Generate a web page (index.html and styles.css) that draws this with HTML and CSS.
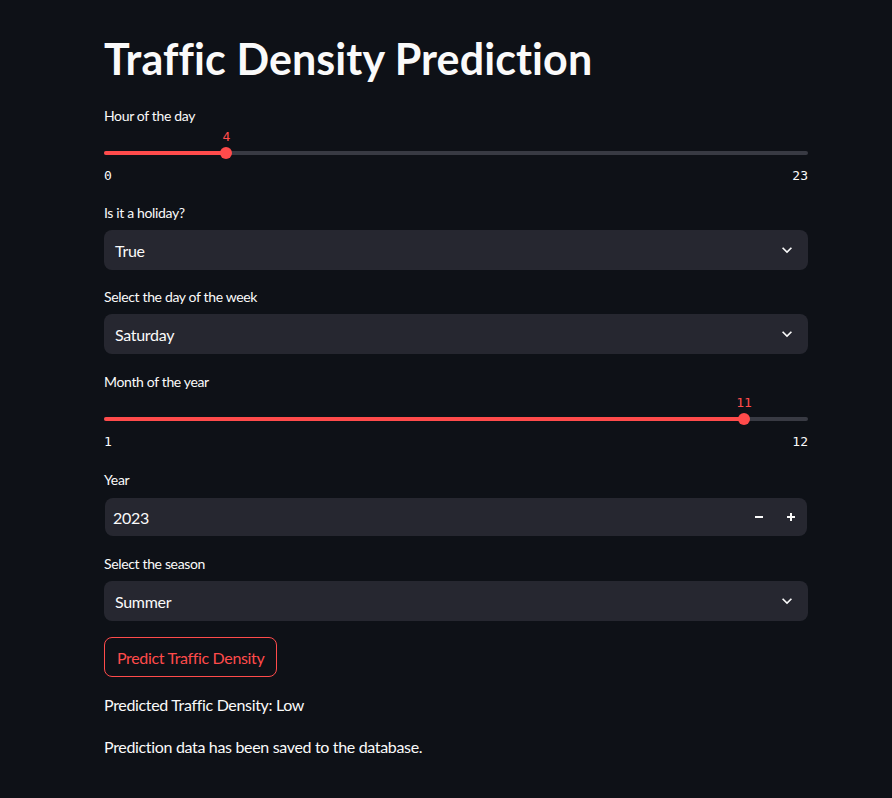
FILE: index.html
```html
<!DOCTYPE html>
<html lang="en">
<head>
<meta charset="utf-8">
<title>Traffic Density Prediction</title>
<link rel="stylesheet" href="styles.css">
</head>
<body>
<main class="main">
  <h1 class="title">Traffic Density Prediction</h1>

  <div class="widget">
    <div class="label">Hour of the day</div>
    <div class="slider">
      <div class="track">
        <div class="fill" style="width: 17.39%"></div>
        <div class="thumb" style="left: 17.39%"><span class="thumb-value">4</span></div>
      </div>
    </div>
    <div class="ticks"><span>0</span><span>23</span></div>
  </div>

  <div class="widget">
    <div class="label">Is it a holiday?</div>
    <div class="select">
      <span class="select-value">True</span>
      <svg class="chevron" viewBox="0 0 24 24" width="20" height="20"><path d="M16.59 8.59L12 13.17 7.41 8.59 6 10l6 6 6-6z" fill="currentColor"/></svg>
    </div>
  </div>

  <div class="widget">
    <div class="label">Select the day of the week</div>
    <div class="select">
      <span class="select-value">Saturday</span>
      <svg class="chevron" viewBox="0 0 24 24" width="20" height="20"><path d="M16.59 8.59L12 13.17 7.41 8.59 6 10l6 6 6-6z" fill="currentColor"/></svg>
    </div>
  </div>

  <div class="widget widget-month">
    <div class="label">Month of the year</div>
    <div class="slider">
      <div class="track">
        <div class="fill" style="width: 90.91%"></div>
        <div class="thumb" style="left: 90.91%"><span class="thumb-value">11</span></div>
      </div>
    </div>
    <div class="ticks"><span>1</span><span>12</span></div>
  </div>

  <div class="widget widget-year">
    <div class="label label-year">Year</div>
    <div class="number">
      <span class="number-value">2023</span>
      <div class="steppers">
        <span class="step"><svg viewBox="0 0 10 10" width="10" height="10"><path d="M1 5h8" stroke="currentColor" stroke-width="2"/></svg></span>
        <span class="step"><svg viewBox="0 0 10 10" width="10" height="10"><path d="M1 5h8M5 1v8" stroke="currentColor" stroke-width="2"/></svg></span>
      </div>
    </div>
  </div>

  <div class="widget">
    <div class="label">Select the season</div>
    <div class="select">
      <span class="select-value">Summer</span>
      <svg class="chevron" viewBox="0 0 24 24" width="20" height="20"><path d="M16.59 8.59L12 13.17 7.41 8.59 6 10l6 6 6-6z" fill="currentColor"/></svg>
    </div>
  </div>

  <div class="widget widget-button">
    <button class="button" type="button">Predict Traffic Density</button>
  </div>

  <p class="text">Predicted Traffic Density: Low</p>
  <p class="text">Prediction data has been saved to the database.</p>
</main>
</body>
</html>
```

FILE: styles.css
```css
html, body {
  margin: 0;
  padding: 0;
  background: #0e1117;
}

body {
  color: #fafafa;
  font-family: "Lato", "Noto Sans", sans-serif;
  font-size: 16px;
}

.main {
  width: 704px;
  padding: 32px 0 0 104px;
  display: flex;
  flex-direction: column;
}

.title {
  margin: 0 0 20px 0;
  height: 53px;
  line-height: 53px;
  font-size: 43px;
  font-weight: 700;
  letter-spacing: 0.1px;
  white-space: nowrap;
}

.widget {
  margin-bottom: 16px;
}

.widget-month {
  margin-top: 1px;
}

.widget-year {
  margin-top: 1px;
  margin-bottom: 17px;
}

.widget-button {
  margin-bottom: 15px;
}

.label {
  height: 22px;
  line-height: 22px;
  font-size: 14px;
  letter-spacing: -0.35px;
  margin-bottom: 6px;
}

.label-year {
  margin-bottom: 7px;
}

.slider {
  height: 36px;
  position: relative;
  margin-top: -6px;
}

.track {
  position: absolute;
  left: 0;
  right: 0;
  top: 24px;
  height: 4px;
  border-radius: 2px;
  background: #383a43;
}

.fill {
  height: 4px;
  border-radius: 2px;
  background: #ff4b4b;
}

.thumb {
  position: absolute;
  top: -4px;
  width: 12px;
  height: 12px;
  margin-left: -6px;
  border-radius: 50%;
  background: #ff4b4b;
}

.thumb-value {
  position: absolute;
  bottom: 14px;
  left: 50%;
  transform: translateX(-50%);
  font-family: "DejaVu Sans Mono", "Liberation Mono", monospace;
  font-size: 13px;
  line-height: 16px;
  color: #ff4b4b;
  white-space: nowrap;
}

.ticks {
  height: 23px;
  line-height: 25px;
  display: flex;
  justify-content: space-between;
  font-family: "DejaVu Sans Mono", "Liberation Mono", monospace;
  font-size: 13px;
}

.select {
  height: 40px;
  border-radius: 8px;
  background: #262730;
  display: flex;
  align-items: center;
  justify-content: space-between;
  padding: 0 11px 0 11px;
}

.select-value {
  font-size: 16px;
  letter-spacing: -0.3px;
}

.chevron {
  color: #fafafa;
}

.number {
  height: 38px;
  border-radius: 8px;
  background: #262730;
  display: flex;
  align-items: center;
  justify-content: space-between;
  padding: 0 6px 0 8px;
  margin: 0 1px;
}

.number-value {
  letter-spacing: -0.3px;
}

.steppers {
  display: flex;
  gap: 12px;
}

.step {
  width: 20px;
  height: 20px;
  display: flex;
  align-items: center;
  justify-content: center;
  color: #fafafa;
}

.button {
  height: 40px;
  padding: 0 12px;
  border: 1px solid #ff4b4b;
  border-radius: 8px;
  background: transparent;
  color: #ff4b4b;
  font-family: inherit;
  font-size: 16px;
  letter-spacing: -0.35px;
}

.text {
  margin: 0 0 16px 0;
  line-height: 25.6px;
  font-size: 16px;
  letter-spacing: -0.33px;
}
```
